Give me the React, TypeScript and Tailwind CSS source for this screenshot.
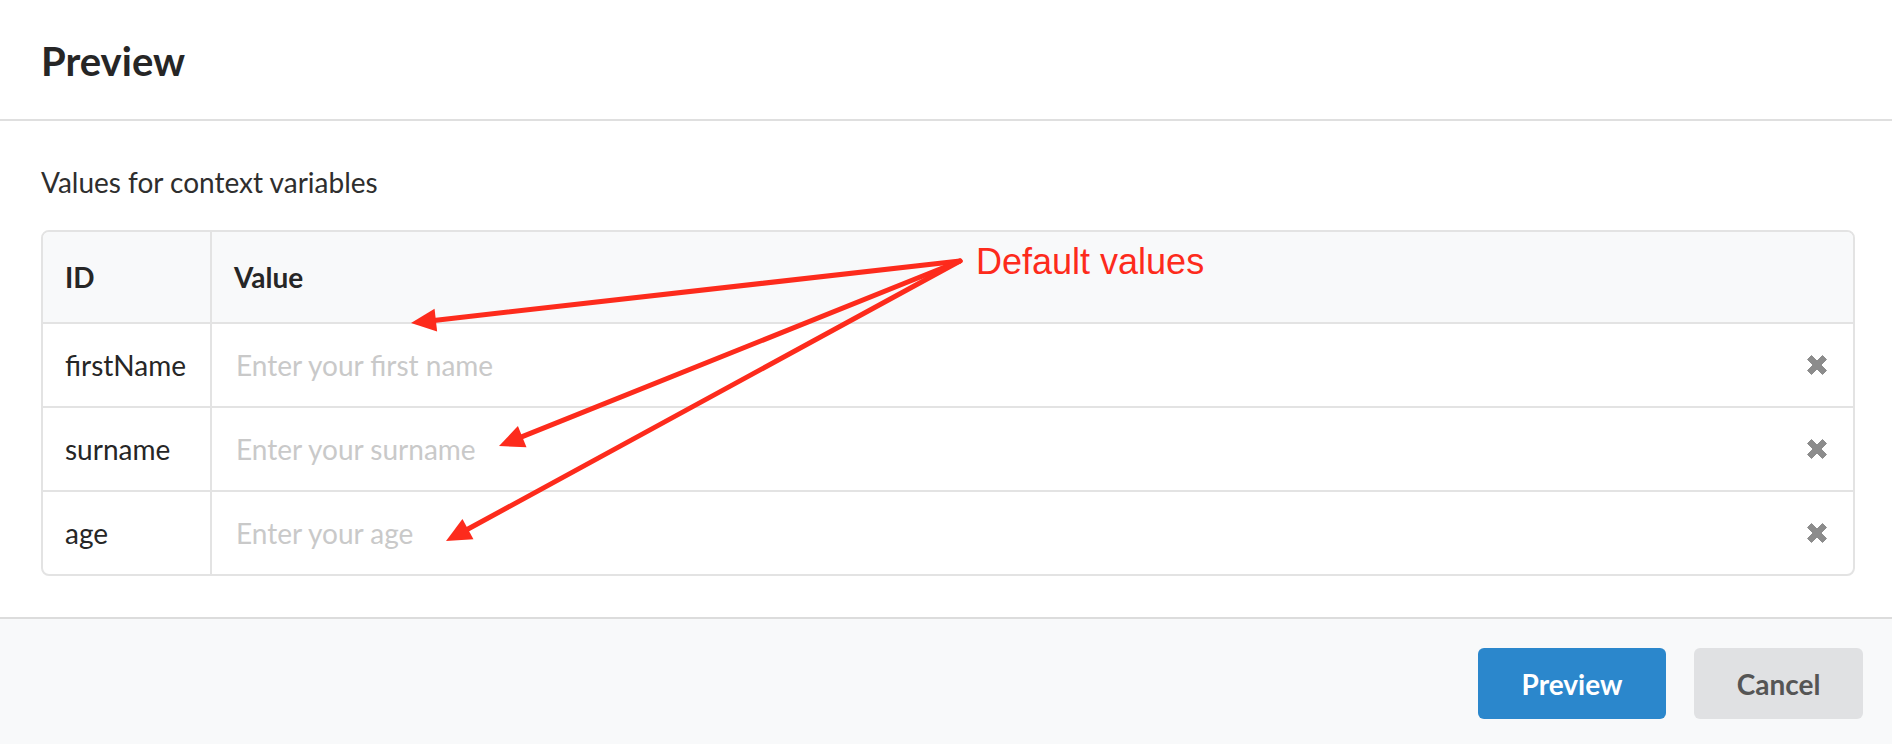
import React from 'react';

type Row = { id: string; placeholder: string };

const ROWS: Row[] = [
  { id: 'firstName', placeholder: 'Enter your first name' },
  { id: 'surname', placeholder: 'Enter your surname' },
  { id: 'age', placeholder: 'Enter your age' },
];

// annotation arrows: all start at the same point near the label
const ORIGIN = { x: 960, y: 261 };
const TIPS = [
  { x: 411, y: 323 },
  { x: 499, y: 446 },
  { x: 446, y: 541 },
];

function Arrow({ tip }: { tip: { x: number; y: number } }) {
  const dx = tip.x - ORIGIN.x;
  const dy = tip.y - ORIGIN.y;
  const len = Math.hypot(dx, dy);
  const ux = dx / len;
  const uy = dy / len;
  const headLen = 25;
  const headW = 23;
  const bx = tip.x - ux * headLen;
  const by = tip.y - uy * headLen;
  const nx = -uy * (headW / 2);
  const ny = ux * (headW / 2);
  return (
    <g>
      <line
        x1={ORIGIN.x}
        y1={ORIGIN.y}
        x2={bx + ux * 2}
        y2={by + uy * 2}
        stroke="#fd2b1c"
        strokeWidth={5}
        strokeLinecap="round"
      />
      <polygon
        points={`${tip.x},${tip.y} ${bx + nx},${by + ny} ${bx - nx},${by - ny}`}
        fill="#fd2b1c"
      />
    </g>
  );
}

function RemoveIcon() {
  return (
    <svg width="22" height="22" viewBox="0 0 22 22" className="text-[#8c8c8c]">
      <path
        d="M5.5 1.5 L11 7 L16.5 1.5 L20.5 5.5 L15 11 L20.5 16.5 L16.5 20.5 L11 15 L5.5 20.5 L1.5 16.5 L7 11 L1.5 5.5 Z"
        fill="currentColor"
        stroke="currentColor"
        strokeWidth="1"
        strokeLinejoin="round"
      />
    </svg>
  );
}

export default function App() {
  return (
    <div className="relative w-[1892px] h-[744px] bg-white flex flex-col font-['Lato',sans-serif] text-[#262626] overflow-hidden">
      {/* Header */}
      <div className="h-[121px] shrink-0 px-[41px] flex items-center border-b-2 border-[#dfdfdf]">
        <h1 className="text-[40px] font-bold leading-none pt-[2px]">Preview</h1>
      </div>

      {/* Body */}
      <div className="flex-1 pl-[41px] pr-[37px] pt-[44px]">
        <p className="text-[28px] leading-[34px] text-[#2e2e2e]">Values for context variables</p>

        <div className="mt-[31px] border-2 border-[#e3e3e3] rounded-[8px] overflow-hidden">
          <div className="flex h-[92px] bg-[#f8f9fa] border-b-2 border-[#e3e3e3] text-[28px] font-bold">
            <div className="w-[169px] shrink-0 border-r-2 border-[#e3e3e3] flex items-center pl-[22px]">
              ID
            </div>
            <div className="flex-1 flex items-center pl-[22px]">Value</div>
          </div>
          {ROWS.map((row, i) => (
            <div
              key={row.id}
              className={
                i < ROWS.length - 1
                  ? 'flex h-[84px] border-b-2 border-[#e3e3e3] text-[28px]'
                  : 'flex h-[82px] text-[28px]'
              }
            >
              <div className="w-[169px] shrink-0 border-r-2 border-[#e3e3e3] flex items-center pl-[22px]">
                {row.id}
              </div>
              <div className="flex-1 flex items-center pl-[24px] pr-[25px]">
                <input
                  className="flex-1 bg-transparent outline-none text-[28px] placeholder:text-[#c9c9c9]"
                  placeholder={row.placeholder}
                />
                <RemoveIcon />
              </div>
            </div>
          ))}
        </div>
      </div>

      {/* Footer */}
      <div className="h-[127px] shrink-0 border-t-2 border-[#dcdcdc] bg-[#f8f9fa] flex items-center justify-end gap-[28px] pr-[29px] pt-[4px]">
        <button className="w-[188px] h-[71px] rounded-[6px] bg-[#2b87cc] text-white text-[28px] font-bold">
          Preview
        </button>
        <button className="w-[169px] h-[71px] rounded-[6px] bg-[#e0e1e3] text-[#555555] text-[28px] font-bold">
          Cancel
        </button>
      </div>

      {/* Annotation overlay */}
      <svg
        className="absolute inset-0 pointer-events-none"
        width="1892"
        height="744"
        viewBox="0 0 1892 744"
      >
        {TIPS.map((t, i) => (
          <Arrow key={i} tip={t} />
        ))}
      </svg>
      <div className="absolute left-[976px] top-[244px] text-[36px] leading-[36px] text-[#fd2b1c] font-['Liberation_Sans',Arial,sans-serif] pointer-events-none">
        Default values
      </div>
    </div>
  );
}
